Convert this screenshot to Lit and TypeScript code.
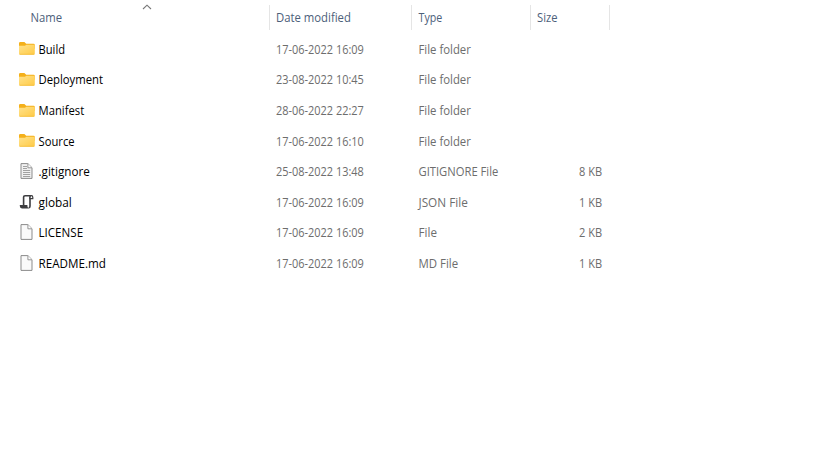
import { LitElement, html, css, svg } from "lit";
import { customElement, property } from "lit/decorators.js";

type Kind = "folder" | "text" | "script" | "blank";
type Label = [text: string, width: number];

interface Entry {
  kind: Kind;
  name: Label;
  date: string;
  type: Label;
  size?: string;
}

const FOLDER: Label = ["File folder", 52];

const ENTRIES: Entry[] = [
  { kind: "folder", name: ["Build", 27], date: "17-06-2022 16:09", type: FOLDER },
  { kind: "folder", name: ["Deployment", 65], date: "23-08-2022 10:45", type: FOLDER },
  { kind: "folder", name: ["Manifest", 46], date: "28-06-2022 22:27", type: FOLDER },
  { kind: "folder", name: ["Source", 36.5], date: "17-06-2022 16:10", type: FOLDER },
  { kind: "text", name: [".gitignore", 51.5], date: "25-08-2022 13:48", type: ["GITIGNORE File", 79.5], size: "8 KB" },
  { kind: "script", name: ["global", 33.5], date: "17-06-2022 16:09", type: ["JSON File", 49], size: "1 KB" },
  { kind: "blank", name: ["LICENSE", 44.5], date: "17-06-2022 16:09", type: ["File", 18.5], size: "2 KB" },
  { kind: "blank", name: ["README.md", 67], date: "17-06-2022 16:09", type: ["MD File", 40], size: "1 KB" },
];

const page = (fill: string) => svg`<path d="M2 .6H8.9L13 4.7V15.4H2Z" fill=${fill} stroke="#8b8b8b"/>
  <path d="M8.9 .8V4.8H12.8" fill="#fff" stroke="#8b8b8b" stroke-width=".9"/>`;

const ICONS = {
  folder: svg`<defs><linearGradient id="g" x1="0" y1="0" x2="1" y2="1">
      <stop offset="0" stop-color="#ffe28c"/><stop offset="1" stop-color="#ffca45"/></linearGradient></defs>
    <g transform="translate(0 .7)">
      <path d="M0 2.6Q0 1.3 1.3 1.3H5.4L7.2 3H14.5Q15.8 3 15.8 4.4V8H0Z" fill="#f4b01a"/>
      <path d="M0 5H5.9L7.4 4H14.6Q15.8 4 15.8 5.2V12.7Q15.8 14 14.5 14H1.3Q0 14 0 12.7Z" fill="url(#g)"/>
      <path d="M.6 13.6H15.2" stroke="#f2bb38" stroke-width=".7"/>
    </g>`,
  text: svg`${page("#f1f1f1")}<path d="M4 3.5H8M4 5.5H8M4 7.5H11.2M4 9.5H11.2M4 11.5H11.2M4 13.5H11.2" stroke="#a2a2a2" stroke-width="1"/>`,
  script: svg`<path d="M4.6 11V3.1Q4.6 1.7 6.1 1.7H12.6Q11 1.9 11 3.5V12.2Q11 13.8 9.6 13.8" fill="#fff" stroke="#3d3d40" stroke-width="1.6"/>
    <path d="M.8 10.9H8.4V12.3Q8.5 13.8 10 14.5H3Q.8 14.4 .8 12.1Z" fill="#3d3d40"/>
    <path d="M11 4.6V3.4Q11 1.6 12.4 1.6Q13.8 1.6 13.8 3.4V4.6Z" fill="#fff" stroke="#3d3d40" stroke-width="1.2"/>`,
  blank: page("#fafafa"),
};

/** One line of text condensed horizontally to the width it is given. */
@customElement("fit-text")
export class FitText extends LitElement {
  @property() text = "";
  @property({ type: Number }) width = 0;

  static styles = css`
    :host { display: block; white-space: nowrap; }
    .line { display: inline-block; transform-origin: 0 50%; }
  `;

  updated() {
    this.style.width = `${this.width}px`;
    const line = this.renderRoot.querySelector<HTMLElement>(".line")!;
    const natural = line.offsetWidth;
    if (natural) line.style.transform = `scaleX(${this.width / natural})`;
  }

  render() {
    return html`<span class="line">${this.text}</span>`;
  }
}

@customElement("app-root")
export class AppRoot extends LitElement {
  static styles = css`
    :host {
      display: block;
      height: 460px;
      overflow: hidden;
      background: #fff;
      color: #6d6d6d;
      font: 12px/16px "Open Sans", "Noto Sans", sans-serif;
    }
    .head, .row {
      display: grid;
      grid-template-columns: 269px 142px 119px 80px;
      align-items: center;
    }
    .head { height: 25px; padding-top: 5px; color: #4c607a; }
    .cell { display: flex; align-items: center; box-sizing: border-box; padding-left: 7px; }
    .head .cell { height: 25px; }
    .head .cell + .cell { border-left: 1px solid #e5e5e5; padding-left: 6px; }
    .head .cell:last-child { border-right: 1px solid #e5e5e5; }
    .head .cell.name { padding-left: 30px; }
    .sort { width: 10px; height: 6px; margin: -21px 0 0 80px; }
    .rows { padding-top: 4.3px; }
    .row { height: 30.65px; }
    .row .name { padding-left: 19px; gap: 3px; color: #000; }
    .name fit-text, .type fit-text { transform: translateX(.5px); }
    .row .size { justify-content: flex-end; padding-right: 7.7px; }
    .icon { width: 16px; height: 16px; flex: none; margin-top: -2.4px; }
  `;

  render() {
    return html`
      <div class="head">
        <div class="cell name">
          <fit-text text="Name" width="32"></fit-text>
          <svg class="sort" viewBox="0 0 10 6"><path d="M1 5L5 1.2L9 5" fill="none" stroke="#777" stroke-width="1.1"/></svg>
        </div>
        <div class="cell"><fit-text text="Date modified" width="74.5"></fit-text></div>
        <div class="cell type"><fit-text text="Type" width="24"></fit-text></div>
        <div class="cell"><fit-text text="Size" width="20.5"></fit-text></div>
      </div>
      <div class="rows">
        ${ENTRIES.map(
          (e) => html`<div class="row">
            <div class="cell name">
              <svg class="icon" viewBox="0 0 16 16">${ICONS[e.kind]}</svg>
              <fit-text .text=${e.name[0]} .width=${e.name[1]}></fit-text>
            </div>
            <div class="cell"><fit-text .text=${e.date} .width=${87.5}></fit-text></div>
            <div class="cell type"><fit-text .text=${e.type[0]} .width=${e.type[1]}></fit-text></div>
            <div class="cell size">${e.size ? html`<fit-text .text=${e.size} .width=${23}></fit-text>` : ""}</div>
          </div>`
        )}
      </div>
    `;
  }
}
